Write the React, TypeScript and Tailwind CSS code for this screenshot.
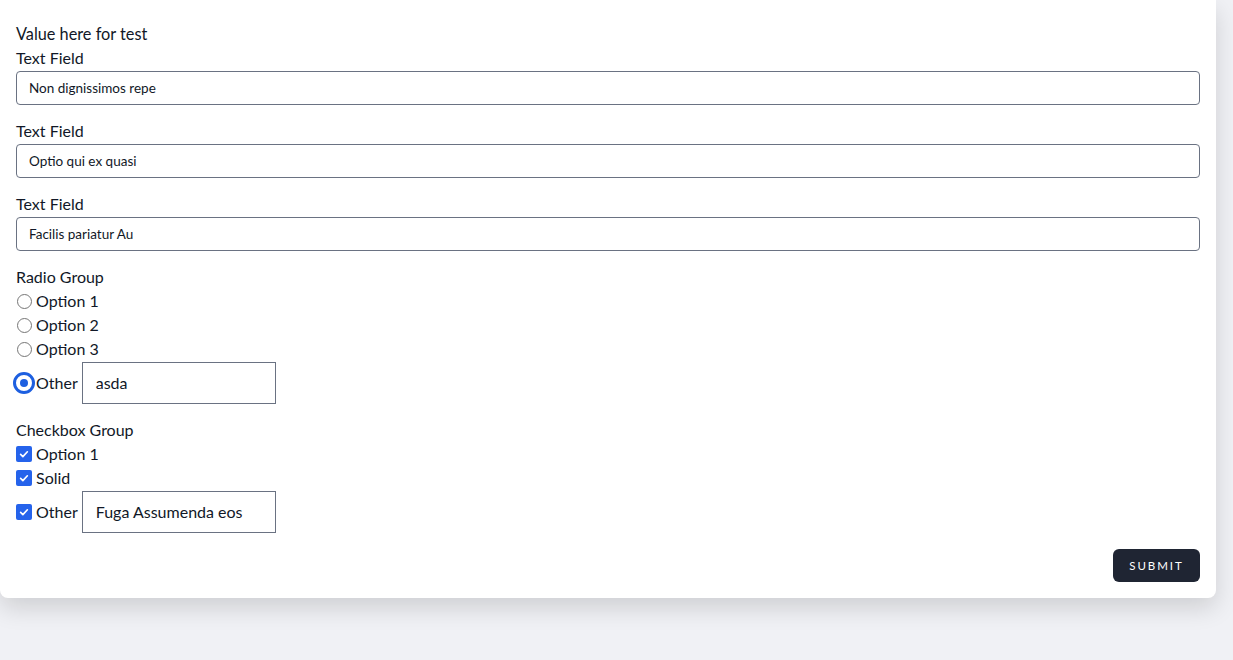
import React from 'react';

const font = { fontFamily: 'Lato, "Noto Sans", sans-serif' };

function Radio({ checked }: { checked?: boolean }) {
  if (checked) {
    return (
      <span className="-mx-[3px] flex h-[22px] w-[22px] shrink-0 items-center justify-center rounded-full border-[3px] border-[#1d5fe0]">
        <span className="flex h-[14px] w-[14px] items-center justify-center rounded-full bg-white">
          <span className="h-[8px] w-[8px] rounded-full bg-[#1d5fe0]" />
        </span>
      </span>
    );
  }
  return (
    <span className="flex h-4 w-4 shrink-0 items-center justify-center">
      <span className="h-[15px] w-[15px] rounded-full border border-[#767676] bg-white" />
    </span>
  );
}

function Check() {
  return (
    <span className="flex h-4 w-4 shrink-0 items-center justify-center rounded-[2px] bg-[#2563eb]">
      <svg viewBox="0 0 16 16" className="h-3 w-3" fill="none" stroke="white" strokeWidth="2.2" strokeLinecap="round" strokeLinejoin="round">
        <path d="M3.5 8.5l3 3 6-6.5" />
      </svg>
    </span>
  );
}

function TextField({ value }: { value: string }) {
  return (
    <div className="mb-[14px]">
      <div className="h-6 leading-6">Text Field</div>
      <div className="mt-px flex h-[34px] items-center rounded-[4px] border border-gray-500 px-3 text-[13.5px]">
        {value}
      </div>
    </div>
  );
}

export default function App() {
  const radios = ['Option 1', 'Option 2', 'Option 3'];
  const checks = ['Option 1', 'Solid'];

  return (
    <div className="min-h-screen bg-[#f0f1f5] text-[#111827]" style={font}>
      <div className="w-[1216px] rounded-b-lg bg-white px-4 pt-[22px] pb-4 shadow-[0_10px_24px_rgba(0,0,0,0.14)]">
        <div className="h-6 text-[16.3px] leading-6">Value here for test</div>

        <TextField value="Non dignissimos repe" />
        <TextField value="Optio qui ex quasi" />
        <TextField value="Facilis pariatur Au" />

        <div className="mb-[14px]">
          <div className="h-6 leading-6">Radio Group</div>
          {radios.map((r) => (
            <div key={r} className="flex h-6 items-center gap-1">
              <Radio />
              <span>{r}</span>
            </div>
          ))}
          <div className="mt-px flex h-[42px] items-center gap-1">
            <Radio checked />
            <span>Other</span>
            <div className="flex h-[42px] w-[194px] items-center border border-gray-500 px-[13px]">asda</div>
          </div>
        </div>

        <div>
          <div className="h-6 leading-6">Checkbox Group</div>
          {checks.map((c) => (
            <div key={c} className="flex h-6 items-center gap-1">
              <Check />
              <span>{c}</span>
            </div>
          ))}
          <div className="mt-px flex h-[42px] items-center gap-1">
            <Check />
            <span>Other</span>
            <div className="flex h-[42px] w-[194px] items-center border border-gray-500 px-[13px]">Fuga Assumenda eos</div>
          </div>
        </div>

        <div className="mt-4 flex justify-end">
          <button className="h-[33px] w-[87px] rounded-md bg-[#1f2533] text-[11.5px] font-normal tracking-[0.17em] text-white">
            SUBMIT
          </button>
        </div>
      </div>
    </div>
  );
}
